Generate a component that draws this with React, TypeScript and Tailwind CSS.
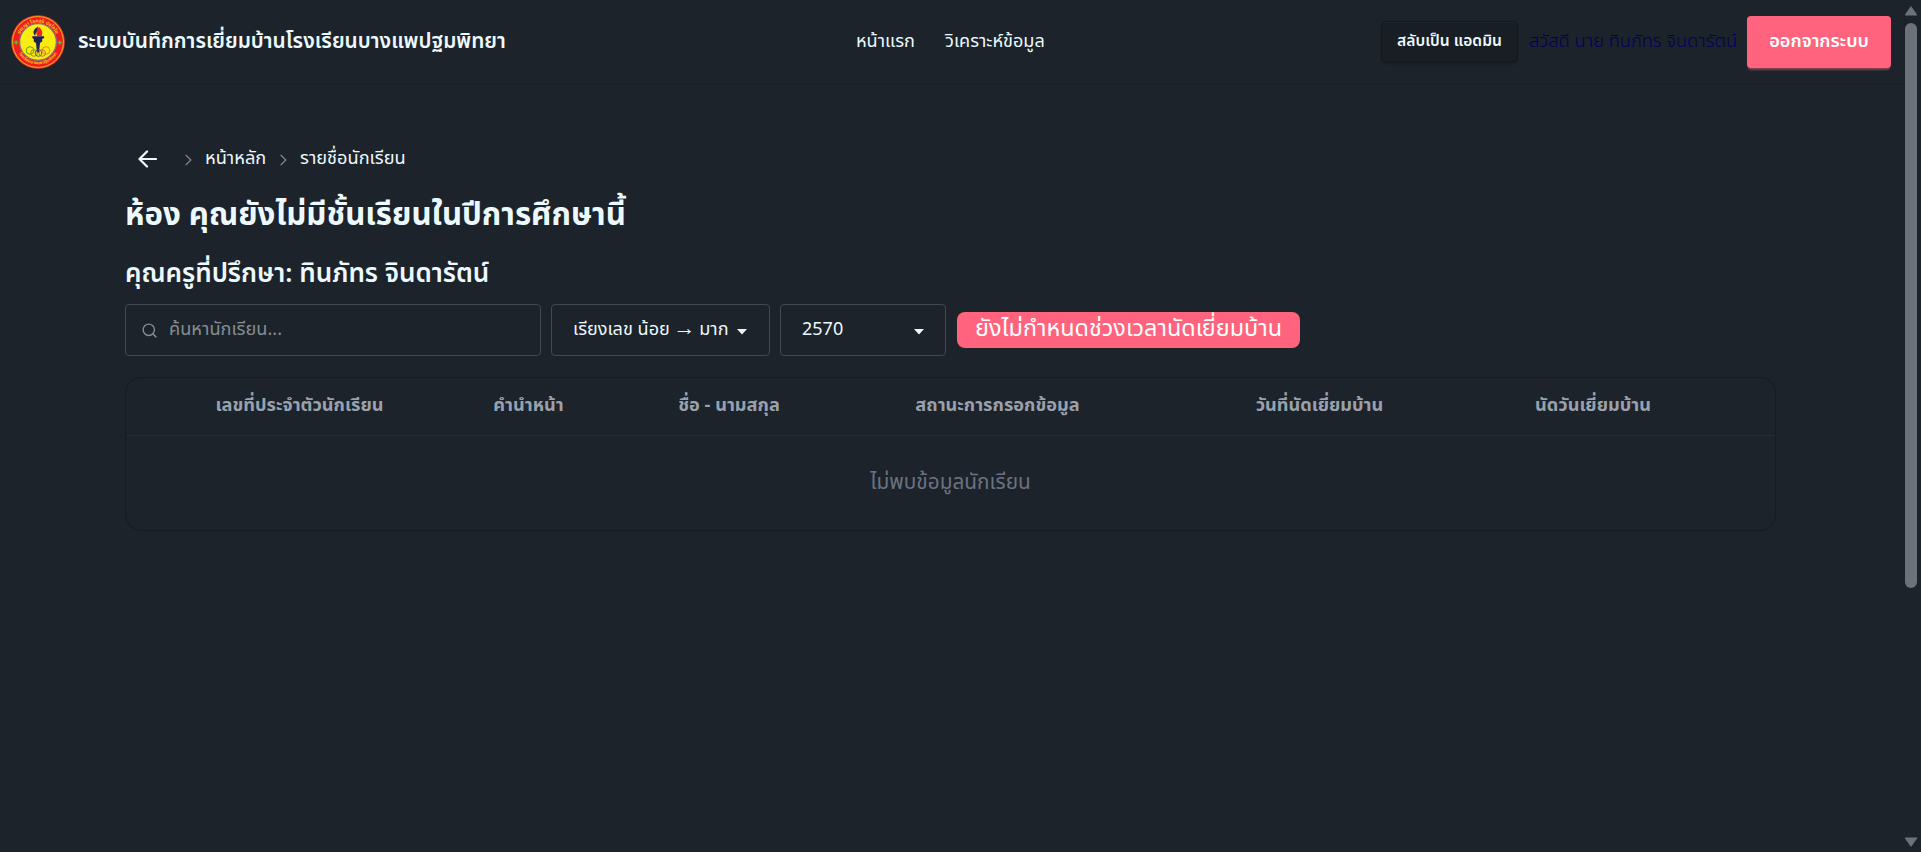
import { Search } from "lucide-react";

const columns = [
  { label: "เลขที่ประจำตัวนักเรียน", width: "w-[347px]" },
  { label: "คำนำหน้า", width: "w-[111px]" },
  { label: "ชื่อ - นามสกุล", width: "w-[290px]" },
  { label: "สถานะการกรอกข้อมูล", width: "w-[247px]" },
  { label: "วันที่นัดเยี่ยมบ้าน", width: "w-[397px]" },
  { label: "นัดวันเยี่ยมบ้าน", width: "w-[150px]" },
];

function Logo() {
  return (
    <svg width="54" height="54" viewBox="0 0 54 54" className="shrink-0">
      <defs>
        <path id="arcTop" d="M7.400 27a19.600 19.600 0 0 1 39.200 0" />
        <path id="arcBottom" d="M4.700 27a22.300 22.300 0 0 0 44.600 0" />
      </defs>
      <circle cx="27" cy="27" r="26.8" fill="#e8432a" />
      <circle cx="27" cy="27" r="25.4" fill="#f01c1f" stroke="#f3b41c" strokeWidth="0.9" />
      <circle cx="27" cy="27" r="18.4" fill="#f8ec10" stroke="#8a6a7c" strokeWidth="1.3" />
      <text fontSize="4.8" fill="#f6c51e" fontWeight="700" textAnchor="middle">
        <textPath href="#arcTop" startOffset="50%">ปญฺญา โลกสฺมิ ปชฺโชโต</textPath>
      </text>
      <text fontSize="4.2" fill="#f6c51e" fontWeight="700" textAnchor="middle">
        <textPath href="#arcBottom" startOffset="50%">โรงเรียนบางแพปฐมพิทยา</textPath>
      </text>
      <path d="M3 27.500h4.400M5.200 25.300v4.400M46.600 27.500H51M48.800 25.300v4.400" stroke="#6fae3a" strokeWidth="1.3" />
      <path d="M28 12c-3 2.500-3.500 5-1.800 9h4.300c1.800-3.500.5-6-2.500-9z" fill="#ee2424" />
      <path d="M27 11.500c-4.800 3-5.700 6.500-2.700 9.500 0-3.500 2.200-5 2.700-9.500z" fill="#1b2050" />
      <path d="M21.300 21.300h11.800v1.600l-1.900 1v2.600l-2.200 1.400-1 9.500h-2l-1-9.500-2.200-1.400v-2.600l-1.500-1z" fill="#1b2058" />
      <g fill="none" strokeWidth="1">
        <circle cx="19" cy="35.500" r="3.800" stroke="#5aa02c" />
        <circle cx="35" cy="35.500" r="3.800" stroke="#f08a1a" />
        <circle cx="23" cy="38" r="3.300" stroke="#a98c3a" />
        <circle cx="27.500" cy="38" r="3.300" stroke="#56588a" />
        <circle cx="31.200" cy="38" r="3.300" stroke="#c0703a" />
      </g>
    </svg>
  );
}

function Crumb({ label, width }: { label: string; width: string }) {
  return (
    <>
      <svg width="7" height="12" viewBox="0 0 7 12" className="mt-px shrink-0" fill="none" stroke="#808890" strokeWidth="1.2">
        <path d="M.7 1l5.200 5-5.200 5" />
      </svg>
      <span className={`mr-[15px] ml-[13px] whitespace-nowrap ${width}`}>{label}</span>
    </>
  );
}

function Caret() {
  return (
    <svg width="10" height="6" viewBox="0 0 10 6" className="mt-1 shrink-0" fill="#ecf9ff">
      <path d="M0 0h10L5 5.500z" />
    </svg>
  );
}

export default function App() {
  return (
    <div className="flex h-[852px] w-full overflow-hidden bg-[#1d232a] font-['Noto_Sans_Thai','Noto_Sans',sans-serif] text-[#ecf9ff]">
      <div className="min-w-0 flex-1">
        <header className="flex h-[83px] items-center pr-[13px] pl-[11px] shadow-[0_1px_2px_rgba(20,20,30,0.35)]">
          <Logo />
          <div className="ml-[13px] w-[778px] text-[20.8px] font-semibold whitespace-nowrap">ระบบบันทึกการเยี่ยมบ้านโรงเรียนบางแพปฐมพิทยา</div>
          <nav className="flex text-[18.1px] whitespace-nowrap">
            <span className="w-[89px]">หน้าแรก</span>
            <span>วิเคราะห์ข้อมูล</span>
          </nav>
          <div className="ml-auto flex items-center">
            <button className="h-[41px] w-[137px] rounded border border-[#14181d] bg-[#191e24] text-[15.6px] font-semibold whitespace-nowrap shadow-[0_3px_3px_-2px_#15191e,inset_0_1px_0_#20262d]">สลับเป็น แอดมิน</button>
            <span className="ml-[11px] w-[218px] text-[18.3px] font-light whitespace-nowrap text-[#00005c]">สวัสดี นาย ทินภัทร จินดารัตน์</span>
            <button className="h-[52px] w-[144px] rounded bg-[#ff637d] text-[18.2px] font-semibold whitespace-nowrap text-white shadow-[0_3px_2px_-1px_rgba(255,99,125,0.45)]">ออกจากระบบ</button>
          </div>
        </header>

        <main className="pr-[128px] pl-[125px]">
          <div className="mt-[64px] flex h-6 items-center pl-[13px] text-[18.2px]">
            <svg width="19" height="18" viewBox="0 0 19 18" className="mr-[28px] shrink-0" fill="none" stroke="#ecf9ff" strokeWidth="2.2" strokeLinecap="round" strokeLinejoin="round">
              <path d="M9 1.500L1.500 9 9 16.500M2 9h16" />
            </svg>
            <Crumb label="หน้าหลัก" width="w-[60px]" />
            <Crumb label="รายชื่อนักเรียน" width="w-[104px]" />
          </div>
          <h1 className="mt-[21px] h-12 text-[31.2px] leading-[48px] font-bold whitespace-nowrap">ห้อง คุณยังไม่มีชั้นเรียนในปีการศึกษานี้</h1>
          <h2 className="mt-[14px] h-10 text-[26px] leading-10 font-semibold whitespace-nowrap">คุณครูที่ปรึกษา: ทินภัทร จินดารัตน์</h2>

          <div className="mt-[10px] flex h-[52px] items-center whitespace-nowrap">
            <div className="flex h-[52px] w-[416px] items-center gap-[11px] rounded border border-[#41484f] pl-[15px] text-[18.2px] text-[#858d94]">
              <Search size={17} strokeWidth={2} />
              <span>ค้นหานักเรียน...</span>
            </div>
            <div className="ml-[10px] flex h-[52px] w-[219px] items-center justify-between rounded border border-[#41484f] pr-[22px] pb-px pl-[21px] text-[18.1px]">
              <span>
                เรียงเลข น้อย <span className="-mx-px text-[22px] leading-none">→</span> มาก
              </span>
              <Caret />
            </div>
            <div className="ml-[10px] flex h-[52px] w-[166px] items-center justify-between rounded border border-[#41484f] pr-[21px] pb-px pl-[21px] text-lg">
              <span>2570</span>
              <Caret />
            </div>
            <div className="ml-[11px] flex h-9 w-[343px] items-center justify-center rounded-lg bg-[#ff637d] text-[23.4px] text-white">ยังไม่กำหนดช่วงเวลานัดเยี่ยมบ้าน</div>
          </div>

          <section className="mt-[21px] h-[154px] rounded-2xl border border-[#171b21]">
            <div className="flex h-[58px] items-center border-b border-[#272d34] pb-px text-[18.2px] font-bold text-[#98a1ad]">
              {columns.map((c) => (
                <div key={c.label} className={`${c.width} shrink-0 text-center whitespace-nowrap`}>{c.label}</div>
              ))}
            </div>
            <div className="flex h-[93px] items-center justify-center text-[20.8px] text-[#697282]">ไม่พบข้อมูลนักเรียน</div>
          </section>
        </main>
      </div>

      <aside className="flex w-[17px] flex-col items-center pt-[6px] pr-[4px] pb-[5px]">
        <svg width="12" height="10" viewBox="0 0 12 10" className="shrink-0" fill="#6b7279"><path d="M6 0l6 8.500v1H0v-1z" /></svg>
        <div className="mt-[7px] h-[565px] w-3 rounded-full bg-[#6b7279]" />
        <svg width="12" height="10" viewBox="0 0 12 10" className="mt-auto shrink-0" fill="#6b7279"><path d="M6 10l6-8.500v-1H0v1z" /></svg>
      </aside>
    </div>
  );
}
